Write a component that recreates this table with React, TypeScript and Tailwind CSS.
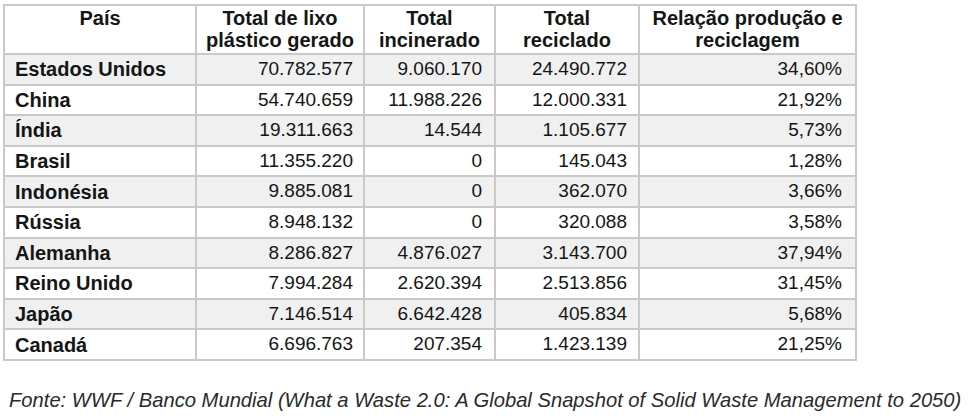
const rows = [
  { pais: 'Estados Unidos', gerado: '70.782.577', incinerado: '9.060.170', reciclado: '24.490.772', relacao: '34,60%' },
  { pais: 'China', gerado: '54.740.659', incinerado: '11.988.226', reciclado: '12.000.331', relacao: '21,92%' },
  { pais: 'Índia', gerado: '19.311.663', incinerado: '14.544', reciclado: '1.105.677', relacao: '5,73%' },
  { pais: 'Brasil', gerado: '11.355.220', incinerado: '0', reciclado: '145.043', relacao: '1,28%' },
  { pais: 'Indonésia', gerado: '9.885.081', incinerado: '0', reciclado: '362.070', relacao: '3,66%' },
  { pais: 'Rússia', gerado: '8.948.132', incinerado: '0', reciclado: '320.088', relacao: '3,58%' },
  { pais: 'Alemanha', gerado: '8.286.827', incinerado: '4.876.027', reciclado: '3.143.700', relacao: '37,94%' },
  { pais: 'Reino Unido', gerado: '7.994.284', incinerado: '2.620.394', reciclado: '2.513.856', relacao: '31,45%' },
  { pais: 'Japão', gerado: '7.146.514', incinerado: '6.642.428', reciclado: '405.834', relacao: '5,68%' },
  { pais: 'Canadá', gerado: '6.696.763', incinerado: '207.354', reciclado: '1.423.139', relacao: '21,25%' },
];

const headers = [
  ['País'],
  ['Total de lixo', 'plástico gerado'],
  ['Total', 'incinerado'],
  ['Total', 'reciclado'],
  ['Relação produção e', 'reciclagem'],
];

export default function App() {
  return (
    <div className="h-[420px] w-[968px] overflow-hidden bg-white font-['Liberation_Sans',Arial,sans-serif] text-[#151515]">
      {/* table: grey background shows through the 2px gaps as the cell borders */}
      <div className="ml-[3px] mt-[4px] grid w-max grid-cols-[190px_166px_129px_142px_215px] gap-[2px] bg-[#c9c9c9] p-[2px] text-[19px]">
        {headers.map((h) => (
          <div key={h[0] + h.length} className="flex h-[47px] flex-col items-center bg-white pt-px text-center text-[20px] font-bold leading-[22px]">
            {h.map((line) => (
              <span key={line} className="whitespace-nowrap">{line}</span>
            ))}
          </div>
        ))}
        {rows.map((r, i) => {
          const bg = i % 2 === 0 ? 'bg-[#f0f0f0]' : 'bg-white';
          return [
            <div key={r.pais} className={`flex h-[28.6px] items-center pl-[10px] text-[20px] font-bold ${bg}`}>{r.pais}</div>,
            <div key={r.pais + 'g'} className={`flex h-[28.6px] items-center justify-end pr-[10px] ${bg}`}>{r.gerado}</div>,
            <div key={r.pais + 'i'} className={`flex h-[28.6px] items-center justify-end pr-[12px] ${bg}`}>{r.incinerado}</div>,
            <div key={r.pais + 'r'} className={`flex h-[28.6px] items-center justify-end pr-[11px] ${bg}`}>{r.reciclado}</div>,
            <div key={r.pais + 'p'} className={`flex h-[28.6px] items-center justify-end pr-[13px] ${bg}`}>{r.relacao}</div>,
          ];
        })}
      </div>

      <p className="ml-[9px] mt-[28px] whitespace-nowrap text-[20.2px] italic leading-[22px] text-[#2a2a2a]">
        Fonte: WWF / Banco Mundial (What a Waste 2.0: A Global Snapshot of Solid Waste Management to 2050)
      </p>
    </div>
  );
}
